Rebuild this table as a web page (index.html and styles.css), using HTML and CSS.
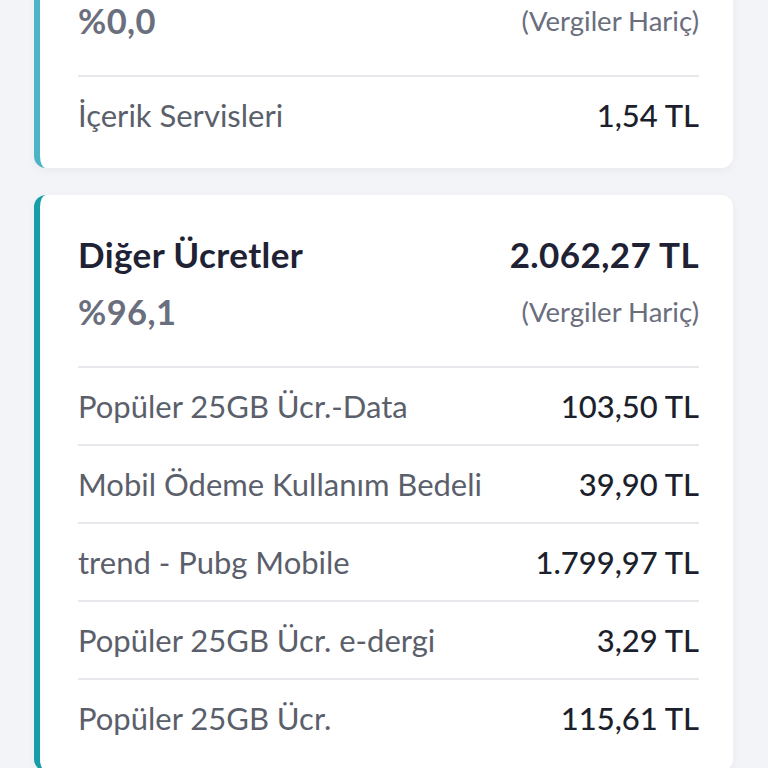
FILE: index.html
```html
<!DOCTYPE html>
<html lang="tr">
<head>
<meta charset="utf-8">
<link rel="stylesheet" href="styles.css">
</head>
<body>
<div class="list">
  <section class="card card--light card--first">
    <div class="head">
      <div class="head-row">
        <span class="pct">%0,0</span>
        <span class="tax">(Vergiler Hariç)</span>
      </div>
    </div>
    <div class="row"><span class="label">İçerik Servisleri</span><span class="value">1,54 TL</span></div>
  </section>

  <section class="card card--dark">
    <div class="head">
      <div class="head-row">
        <span class="title">Diğer Ücretler</span>
        <span class="total">2.062,27 TL</span>
      </div>
      <div class="head-row">
        <span class="pct">%96,1</span>
        <span class="tax">(Vergiler Hariç)</span>
      </div>
    </div>
    <div class="row"><span class="label">Popüler 25GB Ücr.-Data</span><span class="value">103,50 TL</span></div>
    <div class="row"><span class="label">Mobil Ödeme Kullanım Bedeli</span><span class="value">39,90 TL</span></div>
    <div class="row"><span class="label">trend - Pubg Mobile</span><span class="value">1.799,97 TL</span></div>
    <div class="row"><span class="label">Popüler 25GB Ücr. e-dergi</span><span class="value">3,29 TL</span></div>
    <div class="row"><span class="label">Popüler 25GB Ücr.</span><span class="value">115,61 TL</span></div>
  </section>
</div>
</body>
</html>
```

FILE: styles.css
```css
html, body {
  margin: 0;
  padding: 0;
  background: #f3f4f7;
  overflow: hidden;
}
body {
  font-family: "Lato", "Noto Sans", sans-serif;
}
.list {
  display: flex;
  flex-direction: column;
  gap: 27px;
  padding: 0 35px 0 34px;
}
.card {
  background: #ffffff;
  border-radius: 12px;
  border-left: 6px solid #16a0a8;
  padding: 0 34px 15px 38px;
  box-shadow: 0 3px 8px rgba(40, 50, 70, 0.05);
}
.card--first {
  margin-top: -40px;
  padding-top: 40px;
}
.card--light {
  border-left-color: #4db4c6;
}
.card--dark {
  border-left-color: #159ea7;
}
.head {
  padding-top: 39px;
  padding-bottom: 35px;
  border-bottom: 2px solid #e6e8ec;
}
.card--first .head {
  padding-top: 0;
}
.head-row {
  display: flex;
  justify-content: space-between;
  align-items: center;
  height: 40px;
}
.head-row + .head-row {
  margin-top: 17px;
}
.title,
.total {
  font-size: 35px;
  font-weight: 700;
  letter-spacing: 0.4px;
  color: #1e2234;
}
.pct {
  font-size: 34.5px;
  font-weight: 700;
  letter-spacing: 0.4px;
  color: #6a6e7d;
}
.tax {
  font-size: 27.5px;
  color: #6a6e7d;
}
.row {
  display: flex;
  justify-content: space-between;
  align-items: center;
  height: 76px;
  border-bottom: 2px solid #e6e8ec;
}
.row:last-child {
  border-bottom: none;
}
.label {
  font-size: 31px;
  color: #5b5f6b;
}
.value {
  font-size: 31px;
  font-weight: 500;
  color: #1c1f2c;
}
```
